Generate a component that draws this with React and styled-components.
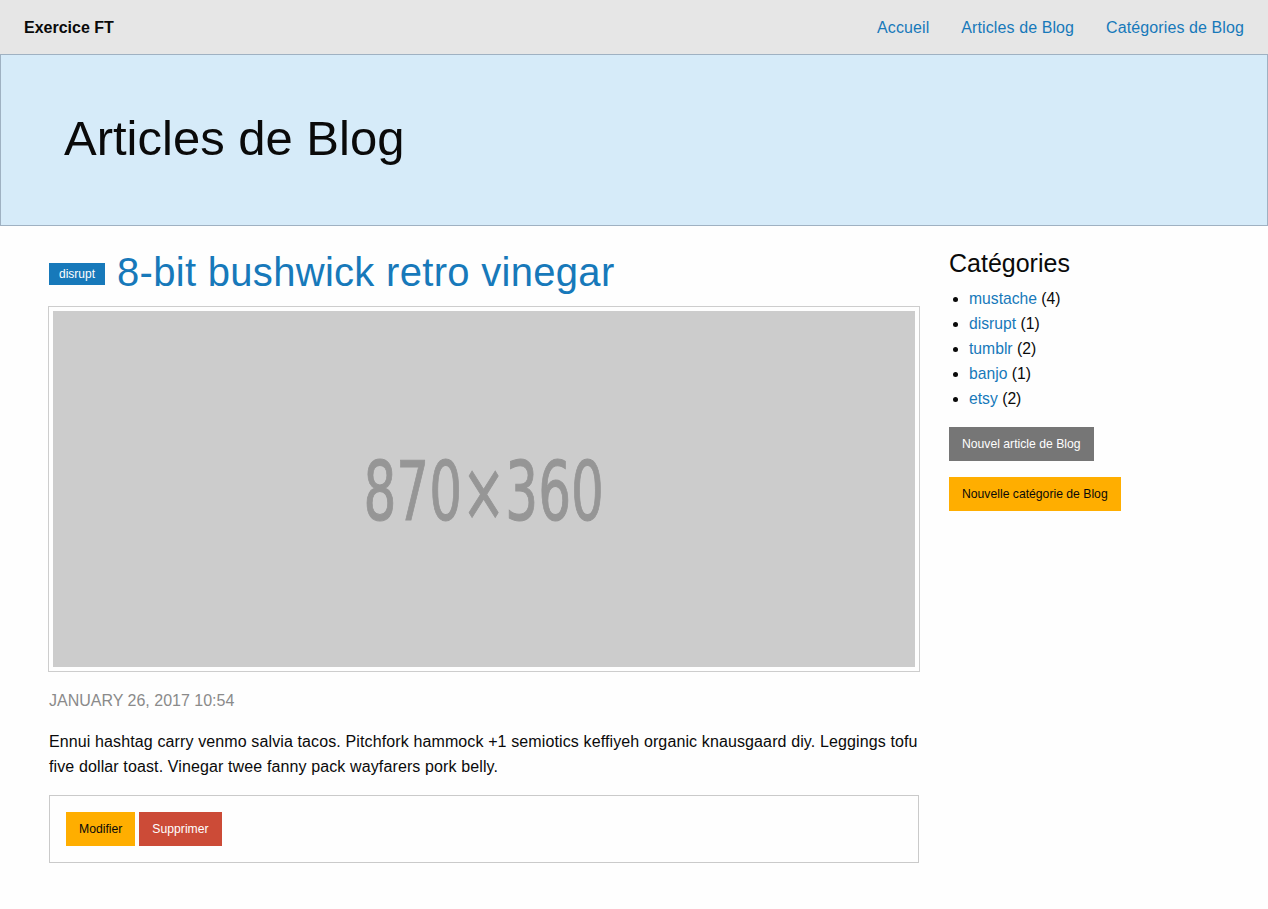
import React from "react";
import styled, { createGlobalStyle } from "styled-components";

const GlobalStyle = createGlobalStyle`
  * { box-sizing: border-box; }
  body {
    margin: 0;
    background: #fefefe;
    color: #0a0a0a;
    font-family: "Liberation Sans", Arial, sans-serif;
    font-size: 16px;
    line-height: 1.5;
  }
  a { color: #1779ba; text-decoration: none; }
`;

const TopBar = styled.nav`
  display: flex;
  align-items: center;
  justify-content: space-between;
  height: 54px;
  padding: 0 8px;
  background: #e6e6e6;
`;

const Brand = styled.span`
  padding: 0 16px;
  font-weight: bold;
  font-size: 16px;
  padding-top: 1px;
`;

const Menu = styled.ul`
  display: flex;
  margin: 0;
  padding: 0;
  list-style: none;
`;

const MenuLink = styled.a`
  display: block;
  padding: 11px 16px 10px;
  font-size: 16px;
  letter-spacing: 0.1px;
`;

const Hero = styled.header`
  height: 172px;
  padding: 0 63px;
  display: flex;
  align-items: center;
  background: #d6ebf9;
  border: 1px solid #9fb1c2;
`;

const HeroTitle = styled.h1`
  margin: 0;
  font-size: 49px;
  font-weight: normal;
  line-height: 1.2;
  padding-bottom: 4px;
`;

const Row = styled.div`
  display: grid;
  grid-template-columns: 9fr 3fr;
  max-width: 1200px;
  margin: 0 auto;
  padding-top: 20px;
`;

const Column = styled.section`
  padding: 0 15px;
`;

const ArticleHead = styled.div`
  display: flex;
  align-items: center;
  gap: 12px;
  height: 48px;
  margin: 2px 0 11px;
`;

const Label = styled.span`
  display: inline-block;
  background: #1779ba;
  color: #fefefe;
  font-size: 12px;
  line-height: 1;
  padding: 5px 10px;
  height: 22px;
  margin-top: 4px;
`;

const ArticleTitle = styled.a`
  font-size: 40px;
  line-height: 1.2;
  letter-spacing: 0.3px;
`;

const Thumbnail = styled.div`
  border: 4px solid #fefefe;
  box-shadow: 0 0 0 1px rgba(10, 10, 10, 0.2);
  margin: 0 0 17px;
`;

const Placeholder = styled.div`
  height: 356px;
  padding-top: 6px;
  background: #cccccc;
  color: #969696;
  display: flex;
  align-items: center;
  justify-content: center;
  font-family: "DejaVu Sans Condensed", "Liberation Sans Narrow", sans-serif;
  font-size: 82px;
  line-height: 1;
  span { display: inline-block; transform: scaleX(0.7); -webkit-text-stroke: 1px #969696; }
`;

const Date = styled.p`
  margin: 0 0 16px;
  color: #8a8a8a;
  text-transform: uppercase;
  font-size: 16px;
  line-height: 25px;
`;

const Body = styled.p`
  margin: 0 0 16px;
  font-size: 16px;
  line-height: 25px;
  letter-spacing: 0.12px;
`;

const ActionBox = styled.div`
  display: flex;
  gap: 4px;
  padding: 16px;
  border: 1px solid #cacaca;
`;

const Button = styled.a`
  display: inline-block;
  padding: 0 13px;
  height: 34px;
  line-height: 34px;
  font-size: 12.2px;
  background: ${(p) => p.$bg};
  color: ${(p) => p.$fg};
`;

const SideTitle = styled.h3`
  margin: 0 0 5px;
  font-size: 25px;
  font-weight: normal;
  line-height: 1.4;
`;

const CatList = styled.ul`
  margin: 0 0 16px;
  padding-left: 20px;
  li { font-size: 15.7px; line-height: 25px; }
`;

const SideActions = styled.div`
  display: flex;
  flex-direction: column;
  align-items: flex-start;
  gap: 16px;
`;

const categories = [
  ["mustache", 4],
  ["disrupt", 1],
  ["tumblr", 2],
  ["banjo", 1],
  ["etsy", 2],
];

export default function App() {
  return (
    <>
      <GlobalStyle />
      <TopBar>
        <Brand>Exercice FT</Brand>
        <Menu>
          <li><MenuLink href="#">Accueil</MenuLink></li>
          <li><MenuLink href="#">Articles de Blog</MenuLink></li>
          <li><MenuLink href="#">Catégories de Blog</MenuLink></li>
        </Menu>
      </TopBar>
      <Hero>
        <HeroTitle>Articles de Blog</HeroTitle>
      </Hero>
      <Row>
        <Column>
          <ArticleHead>
            <Label>disrupt</Label>
            <ArticleTitle href="#">8-bit bushwick retro vinegar</ArticleTitle>
          </ArticleHead>
          <Thumbnail>
            <Placeholder><span>870×360</span></Placeholder>
          </Thumbnail>
          <Date>January 26, 2017 10:54</Date>
          <Body>
            Ennui hashtag carry venmo salvia tacos. Pitchfork hammock +1 semiotics keffiyeh organic knausgaard diy. Leggings tofu five dollar toast. Vinegar twee fanny pack wayfarers pork belly.
          </Body>
          <ActionBox>
            <Button href="#" $bg="#ffae00" $fg="#0a0a0a">Modifier</Button>
            <Button href="#" $bg="#cc4b37" $fg="#fefefe">Supprimer</Button>
          </ActionBox>
        </Column>
        <Column>
          <SideTitle>Catégories</SideTitle>
          <CatList>
            {categories.map(([name, n]) => (
              <li key={name}><a href="#">{name}</a> ({n})</li>
            ))}
          </CatList>
          <SideActions>
            <Button href="#" $bg="#767676" $fg="#fefefe">Nouvel article de Blog</Button>
            <Button href="#" $bg="#ffae00" $fg="#0a0a0a">Nouvelle catégorie de Blog</Button>
          </SideActions>
        </Column>
      </Row>
    </>
  );
}
